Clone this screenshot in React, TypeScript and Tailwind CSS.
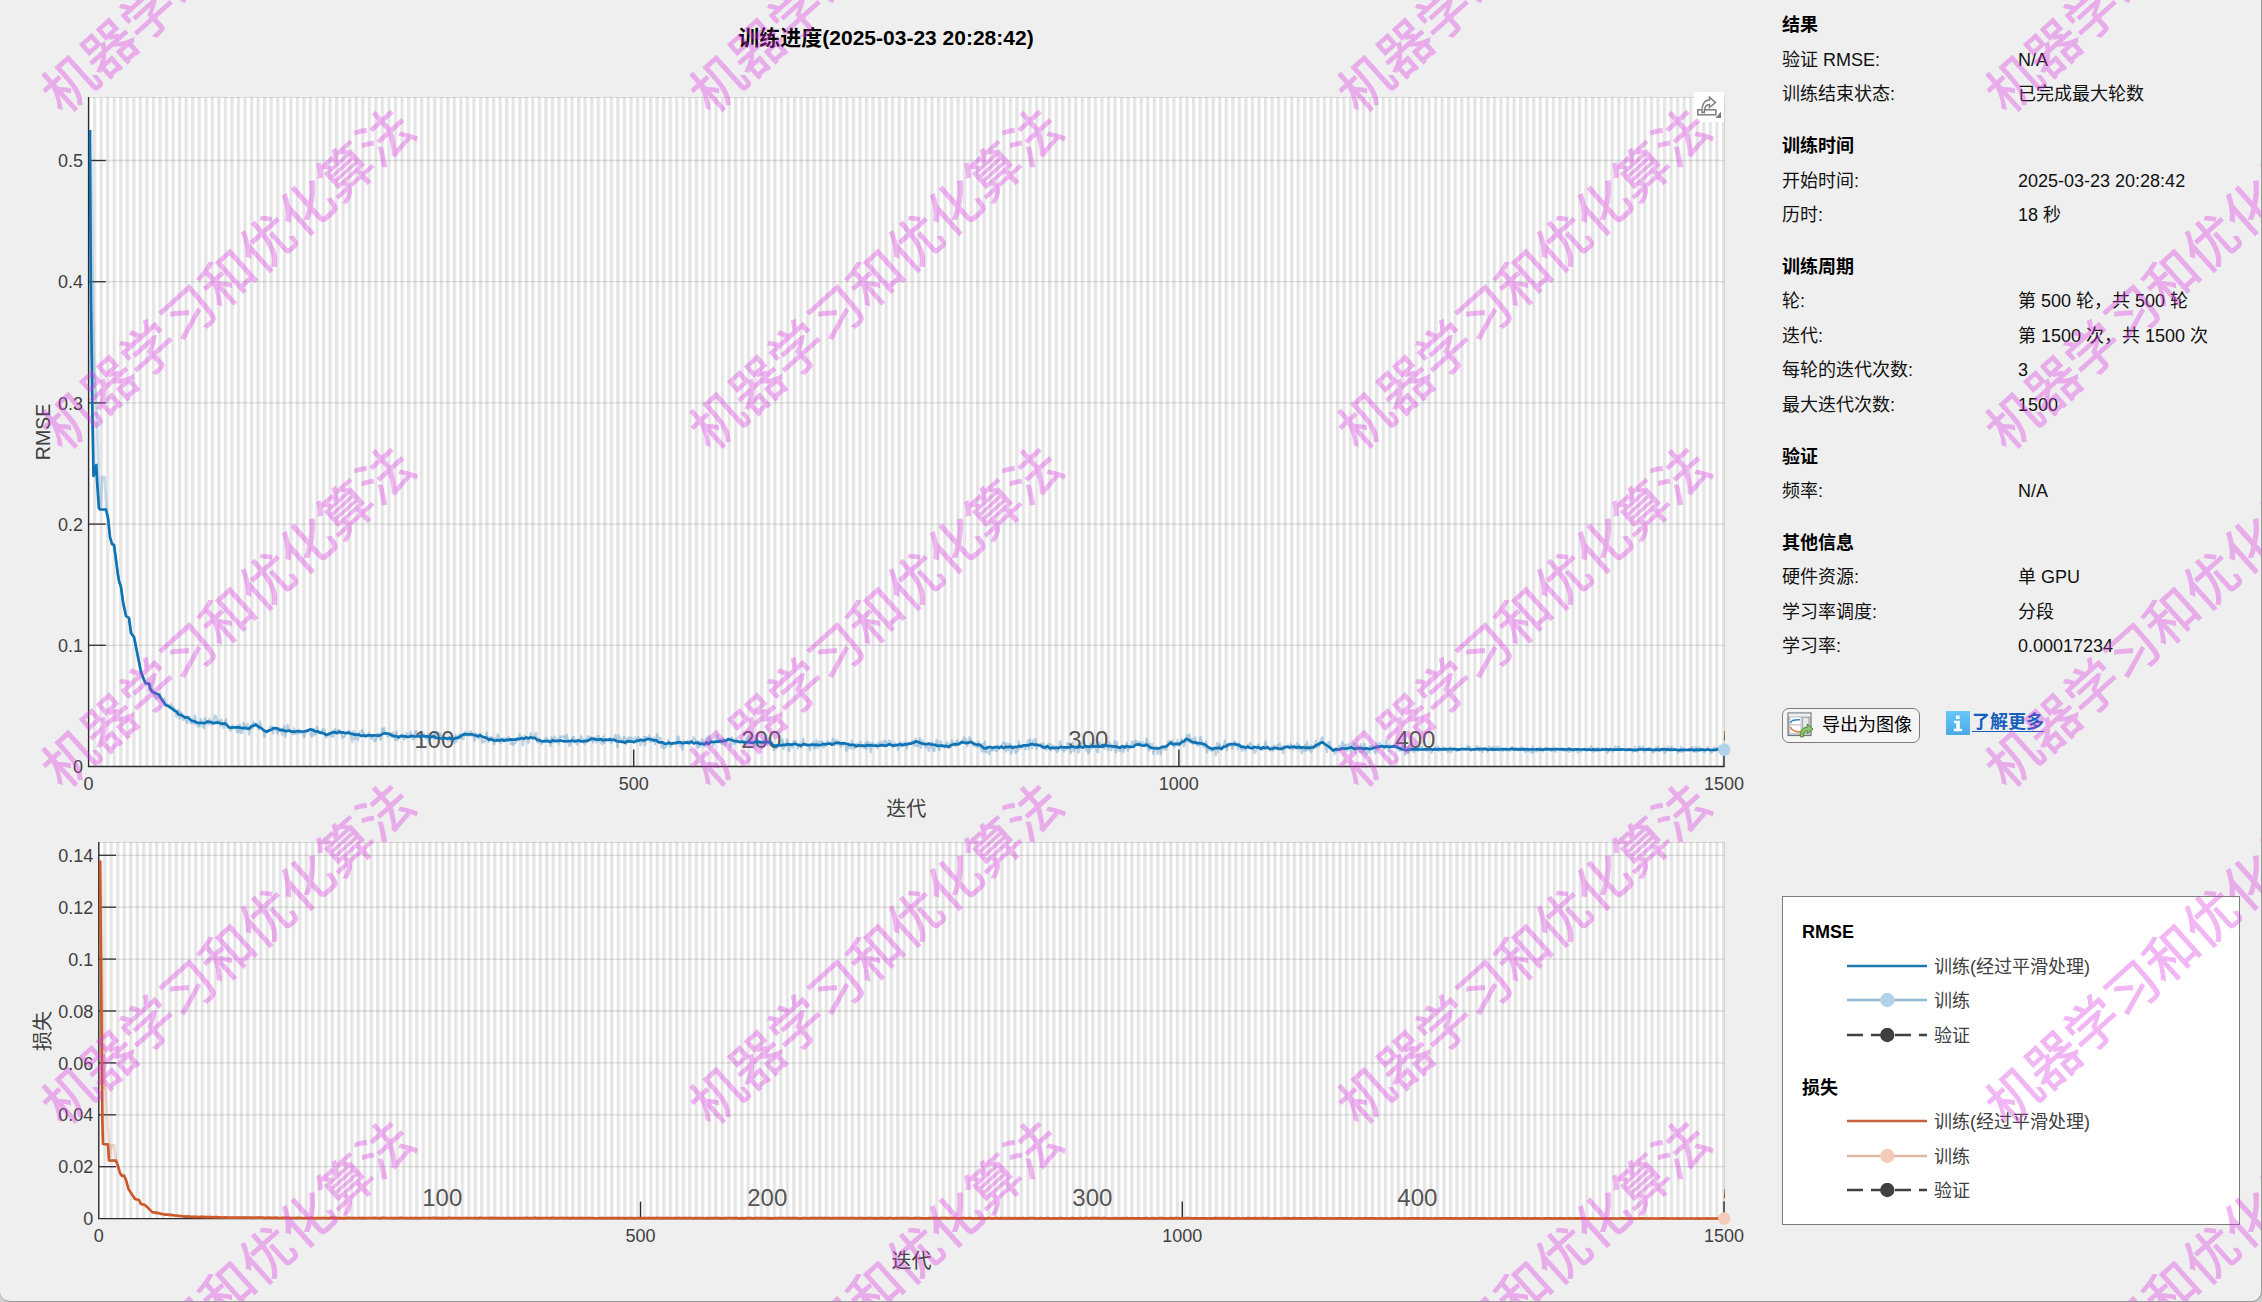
import clsx from "clsx";
import React from "react";

type Point = [number, number];

type PlotProps = {
  id: string;
  top: number;
  height: number;
  left: number;
  plotTop: number;
  bottom: number;
  yTicks: { label: string; y: number }[];
  yLabel: string;
  yLabelY: number;
  yLabelSize: number;
  smooth: Point[];
  raw: Point[];
  color: string;
  rawColor: string;
  markerColor: string;
  smoothNoise: number;
  rawNoise: number;
};

const RIGHT = 1724;
const FONT = '"Liberation Sans", "Noto Sans CJK SC", sans-serif';

const rmseCurve: Point[] = [
  [89.8, 130], [91, 300], [92.5, 420], [93.5, 476], [96.3, 465], [97, 480],
  [98.9, 508], [100, 509.5], [106, 509.5], [108, 518], [110, 537], [112, 544],
  [114, 545], [116, 560], [118, 575], [119, 581], [121, 587], [123, 602],
  [126, 616], [129, 618], [131, 633], [134, 637], [137, 652], [141, 672],
  [144, 680], [145.5, 683], [149, 684], [150, 689], [154, 693], [159, 695],
  [163, 701], [166, 705], [172, 709], [180, 715], [185, 717], [197, 722],
  [203, 723], [208, 722], [220, 723], [225, 724], [231, 728], [237, 727],
  [249, 729], [255, 724], [261, 729], [267, 732], [272, 729], [280, 729],
  [285, 731], [300, 731.7], [313, 730], [327, 734.3], [340, 731.7],
  [353, 734.3], [374, 736], [387, 733.3], [396, 736.7], [416, 736],
  [434, 737], [454, 739.3], [465, 734.3], [479, 735.7], [492, 740.3],
  [514, 739.3], [532, 737.7], [543, 741.7], [559, 741], [586, 741],
  [595, 738.3], [604, 740.3], [612, 739.7], [626, 742], [650, 739.3],
  [664, 743.3], [693, 742.3], [702, 744], [726, 740], [751, 742.3],
  [769, 741.7], [775, 745.7], [791, 744.3], [818, 745], [840, 743.3],
  [854, 745.7], [903, 745], [916, 742.3], [947, 746.7], [961, 742.7],
  [974, 742.7], [985, 747.7], [1000, 747], [1013, 747.3], [1022, 745.7],
  [1038, 744.3], [1043, 747], [1053, 747.7], [1067, 747], [1100, 747],
  [1103, 745.3], [1117, 747], [1132, 747], [1137, 744.3], [1147, 745],
  [1152, 748.3], [1160, 748.7], [1171, 743.3], [1177, 745], [1187, 739],
  [1192, 742.3], [1202, 743.3], [1212, 749], [1222, 748.3], [1233, 743.3],
  [1245, 747.7], [1283, 748.3], [1287, 747], [1313, 747.7], [1322, 742.3],
  [1333, 750], [1350, 747.7], [1372, 749], [1378, 746], [1393, 746],
  [1403, 749.3], [1500, 749.3], [1724, 749.8],
];

const rmseRaw: Point[] = [
  [91, 130], [93, 300], [94.5, 380], [96.5, 400], [98, 450], [99, 500],
  [101, 508], [102, 477], [104.5, 477], [106.5, 510],
];

const lossCurve: Point[] = [
  [100, 860.5], [101, 960], [101.8, 1060], [102.3, 1118], [103, 1144],
  [108, 1144.3], [109, 1160.5], [116, 1160.7], [118, 1166], [120, 1173],
  [122, 1176], [124, 1175.5], [126, 1180], [128.5, 1189], [133, 1196],
  [135, 1199], [139, 1200], [141, 1204], [145, 1205], [152, 1212],
  [165, 1214.5], [185, 1216.5], [230, 1217.6], [300, 1218], [1724, 1218.5],
];

const lossRaw: Point[] = [
  [101, 861], [103, 1050], [104.5, 1088], [106, 1090], [108, 1130],
  [110, 1158], [111.3, 1145], [114, 1145], [116, 1160],
];

const sections = [
  {
    title: "结果",
    rows: [
      ["验证 RMSE:", "N/A"],
      ["训练结束状态:", "已完成最大轮数"],
    ],
  },
  {
    title: "训练时间",
    rows: [
      ["开始时间:", "2025-03-23 20:28:42"],
      ["历时:", "18 秒"],
    ],
  },
  {
    title: "训练周期",
    rows: [
      ["轮:", "第 500 轮，共 500 轮"],
      ["迭代:", "第 1500 次，共 1500 次"],
      ["每轮的迭代次数:", "3"],
      ["最大迭代次数:", "1500"],
    ],
  },
  {
    title: "验证",
    rows: [["频率:", "N/A"]],
  },
  {
    title: "其他信息",
    rows: [
      ["硬件资源:", "单 GPU"],
      ["学习率调度:", "分段"],
      ["学习率:", "0.00017234"],
    ],
  },
];

function toPath(points: Point[]) {
  return points
    .map(([x, y], i) => `${i ? "L" : "M"}${x.toFixed(1)} ${y.toFixed(1)}`)
    .join("");
}

// Samples a curve every iteration or so and adds a repeatable jitter
function jitter(points: Point[], step: number, amount: number, seed: number) {
  let s = seed;
  const rand = () => {
    s = (s * 16807) % 2147483647;
    return s / 2147483647 - 0.5;
  };
  const out: Point[] = points.filter(([x]) => x < 150);
  let k = 0;
  for (let x = 150; x <= RIGHT; x += step) {
    while (k < points.length - 2 && points[k + 1][0] < x) k++;
    const [x0, y0] = points[k];
    const [x1, y1] = points[k + 1];
    const y = y0 + ((y1 - y0) * (x - x0)) / (x1 - x0);
    const scale = x > 1410 ? 0.5 : 1;
    out.push([x, y + (rand() + rand()) * amount * scale]);
  }
  return out;
}

function Plot(props: PlotProps) {
  const { id, top, height, left, plotTop, bottom, color } = props;
  const unit = (RIGHT - left) / 1500;
  const mid = (left + RIGHT) / 2;

  return (
    <svg
      className="block shrink-0"
      width={1762}
      height={height}
      viewBox={`0 ${top} 1762 ${height}`}
      fontFamily={FONT}
    >
      <defs>
        <pattern
          id={`${id}-epochs`}
          x={left + unit * 4}
          y={0}
          width={unit * 6}
          height={10}
          patternUnits="userSpaceOnUse"
        >
          <rect width={unit * 3} height={10} fill="#e5e5e5" />
        </pattern>
        <clipPath id={`${id}-clip`}>
          <rect x={left} y={plotTop} width={RIGHT - left + 1} height={bottom - plotTop + 3} />
        </clipPath>
      </defs>

      <rect x={left} y={plotTop} width={RIGHT - left} height={bottom - plotTop} fill="#fff" />
      <rect
        x={left + unit * 4}
        y={plotTop}
        width={RIGHT - left - unit * 4}
        height={bottom - plotTop}
        fill={`url(#${id}-epochs)`}
      />
      <path
        d={`M${left} ${plotTop + 0.5}H${RIGHT + 0.5}V${bottom}`}
        fill="none"
        stroke="#262626"
        strokeOpacity={0.14}
      />
      {props.yTicks.map(({ y, label }) => (
        <g key={label}>
          {label !== "0" && (
            <>
              <path d={`M${left} ${y}H${RIGHT}`} stroke="#262626" strokeOpacity={0.14} strokeWidth={1.3} />
              <path d={`M${left} ${y}h17.2`} stroke="#303030" strokeWidth={1.3} />
            </>
          )}
          <text x={left - 5.5} y={y + 6.6} textAnchor="end" fontSize={18} fill="#404040">
            {label}
          </text>
        </g>
      ))}

      <path d={`M${left} ${plotTop}V${bottom}H${RIGHT + 0.5}`} fill="none" stroke="#2b2b2b" strokeWidth={1.4} />
      {[0, 500, 1000, 1500].map((n) => (
        <g key={n}>
          {n > 0 && (
            <path d={`M${left + unit * n} ${bottom}v-17`} stroke="#2b2b2b" strokeWidth={1.4} />
          )}
          <text x={left + unit * n} y={bottom + 23.4} textAnchor="middle" fontSize={18} fill="#404040">
            {n}
          </text>
        </g>
      ))}

      <g clipPath={`url(#${id}-clip)`}>
        {[100, 200, 300, 400, 500].map((n) => (
          <text
            key={n}
            x={left + unit * (n * 3 + 17)}
            y={id === "rmse" ? 747.5 : 1206}
            textAnchor="middle"
            fontSize={24}
            fill="#555"
          >
            {n}
          </text>
        ))}
        <path
          d={toPath(jitter(props.smooth, 1.1, props.rawNoise, 77))}
          fill="none"
          stroke={props.rawColor}
          strokeOpacity={0.3}
          strokeWidth={2.2}
          strokeLinejoin="round"
        />
        <path d={toPath(props.raw)} fill="none" stroke={props.rawColor} strokeOpacity={0.25} strokeWidth={2.6} />
        <path
          d={toPath(jitter(props.smooth, 2.2, props.smoothNoise, 1234))}
          fill="none"
          stroke={color}
          strokeWidth={2.7}
          strokeLinejoin="round"
        />
      </g>
      <circle
        cx={RIGHT + 0.3}
        cy={props.smooth[props.smooth.length - 1][1]}
        r={6.3}
        fill={props.markerColor}
      />

      <text x={mid} y={bottom + 49} textAnchor="middle" fontSize={20} fill="#404040">
        迭代
      </text>
      <text
        transform={`translate(50 ${props.yLabelY}) rotate(-90)`}
        textAnchor="middle"
        fontSize={props.yLabelSize}
        fill="#404040"
      >
        {props.yLabel}
      </text>
    </svg>
  );
}

function ShareIcon() {
  return (
    <svg width="30" height="30" viewBox="0 0 30 30" className="block">
      <rect x="3.8" y="17.8" width="18" height="5" fill="#fff" stroke="#7d7d7d" strokeWidth="1.5" />
      <path
        d="M8 20.5C7.5 13 10 8.3 15.5 8V5.2L21.5 10.5L15.5 15.5V12.5C11.5 12.5 10.3 15 10.3 20.5Z"
        fill="#fff"
        stroke="#7d7d7d"
        strokeWidth="1.5"
      />
      <path d="M21.5 26H27V19.5Z" fill="#7d7d7d" />
    </svg>
  );
}

function ExportIcon() {
  return (
    <svg width="27" height="26" viewBox="0 0 27 26" className="block shrink-0">
      <rect x="1" y="1" width="23" height="22.5" fill="#c9ccd1" stroke="#777" strokeWidth="1.2" />
      <rect x="1.6" y="1.6" width="21.8" height="2.6" fill="#eceff3" />
      <rect x="3.5" y="5.5" width="10" height="6.5" fill="#fff" />
      <rect x="3.5" y="13.5" width="10" height="7.5" fill="#fff" />
      <rect x="15.8" y="5.5" width="6" height="15" fill="#e6e8ec" stroke="#999" strokeWidth=".7" />
      <path d="M3.5 11C5 7.5 7 7.8 13 7.8" fill="none" stroke="#2f86c7" strokeWidth="1.5" />
      <path d="M3.5 15C5 19 8 20 13.5 20" fill="none" stroke="#e07a3c" strokeWidth="1.5" />
      <path
        d="M13.3 24.8C12.8 18.5 15.5 15.4 20.2 15.3V12L26 17L20.2 21.6V18.8C17.5 18.8 16.5 20.5 16.6 24.8Z"
        fill="#8cc26a"
        stroke="#4a8a33"
        strokeWidth="1"
      />
    </svg>
  );
}

function LegendLine({ color, label, marker, dashed }: {
  color: string;
  label: string;
  marker?: string;
  dashed?: boolean;
}) {
  return (
    <div className="flex h-[34.5px] items-center pl-[45px] text-[#404040]">
      <svg width="80" height="16" className="mr-[7px] block shrink-0">
        <path
          d="M0 7H80"
          stroke={color}
          strokeWidth="2.4"
          strokeDasharray={dashed ? "16 8" : undefined}
        />
        {marker && <circle cx="40.3" cy="7" r="7.2" fill={marker} />}
      </svg>
      <span className="whitespace-nowrap">{label}</span>
    </div>
  );
}

function Legend() {
  return (
    <div className="mt-[153px] h-[329px] w-[458px] border border-[#7d7d7d] bg-white pt-[18.5px] pl-[19px]">
      <h3 className="flex h-[34.5px] items-center font-bold">RMSE</h3>
      <LegendLine color="#1f77b4" label="训练(经过平滑处理)" />
      <LegendLine color="#95b9d2" marker="#b1d3e9" label="训练" />
      <LegendLine color="#404040" marker="#404040" label="验证" dashed />
      <h3 className="mt-[17.5px] flex h-[34.5px] items-center font-bold">损失</h3>
      <LegendLine color="#c4623a" label="训练(经过平滑处理)" />
      <LegendLine color="#e0b6a4" marker="#f4cbba" label="训练" />
      <LegendLine color="#404040" marker="#404040" label="验证" dashed />
    </div>
  );
}

function Sidebar() {
  return (
    <aside className="flex w-[480px] flex-col pt-[8px] pl-[20px] text-[18px] leading-none text-black">
      {sections.map((section, i) => (
        <section key={section.title} className={clsx(i > 0 && "mt-[17.3px]")}>
          <h2 className="flex h-[34.5px] items-center font-bold">{section.title}</h2>
          <dl className="text-[#111]">
            {section.rows.map(([label, value]) => (
              <div key={label} className="flex h-[34.5px] items-center">
                <dt className="w-[236px]">{label}</dt>
                <dd className="whitespace-nowrap">{value}</dd>
              </div>
            ))}
          </dl>
        </section>
      ))}
      <div className="mt-[44px] flex h-[35px] items-start">
        <button className="flex h-[35px] w-[138px] items-center rounded-[7px] border border-[#7d7d7d] bg-[#f5f5f5] pl-[4px]">
          <ExportIcon />
          <span className="ml-[8px] whitespace-nowrap">导出为图像</span>
        </button>
        <a href="#" className="mt-[3px] ml-[26px] flex items-center text-[#1560bd]">
          <svg width="24" height="24" className="block">
            <defs>
              <linearGradient id="info" x1="0" y1="0" x2="0" y2="1">
                <stop offset="0" stopColor="#68c8fb" />
                <stop offset="1" stopColor="#49a9e3" />
              </linearGradient>
            </defs>
            <rect width="24" height="24" fill="url(#info)" />
            <path d="M10 4.5h3.6v3.4H10zM8 9.8h5.8v8h2.3v2.5H7.8v-2.5h2.5v-5.5H8z" fill="#fff" />
          </svg>
          <span className="ml-[2px] border-b-[1.5px] border-[#1560bd] font-bold whitespace-nowrap">
            了解更多
          </span>
        </a>
      </div>
      <Legend />
    </aside>
  );
}

function Watermark() {
  return (
    <div className="pointer-events-none absolute inset-0 overflow-hidden">
      {[84.5, 421.8, 759.2, 1096.5, 1433.8].map((y) =>
        [70, 718, 1366, 2014].map((x) => (
          <span
            key={`${x}-${y}`}
            className="absolute origin-[26.5px_26.5px] rotate-[-42deg] text-[53.1px] leading-[53px] whitespace-nowrap text-[#da33e0] opacity-35 [-webkit-text-stroke:1px_#da33e0]"
            style={{ left: x - 26.5, top: y - 26.5 }}
          >
            机器学习和优化算法
          </span>
        ))
      )}
    </div>
  );
}

function App() {
  return (
    <div className="h-[1302px] w-[2262px] overflow-hidden bg-[#cfcfcf] font-['Liberation_Sans','Noto_Sans_CJK_SC',sans-serif]">
      <div className="relative flex h-[1302px] w-[2262px] overflow-hidden rounded-b-[10px] border-r border-b border-[#999] bg-[#efefef]">
        <main className="relative flex w-[1762px] flex-col">
          <h1 className="flex h-[72px] w-[1772px] items-center justify-center pt-[2px] text-[21px] leading-none font-bold text-black">
            训练进度(2025-03-23 20:28:42)
          </h1>
          <Plot
            id="rmse"
            top={72}
            height={758}
            left={88.6}
            plotTop={97}
            bottom={766.5}
            yTicks={["0", "0.1", "0.2", "0.3", "0.4", "0.5"].map((label, i) => ({
              label,
              y: 766.5 - i * 121.2,
            }))}
            yLabel="RMSE"
            yLabelY={432}
            yLabelSize={19.5}
            smooth={rmseCurve}
            raw={rmseRaw}
            color="#0f72b5"
            rawColor="#1f77b4"
            markerColor="#b0d2ea"
            smoothNoise={1.2}
            rawNoise={7.5}
          />
          <Plot
            id="loss"
            top={830}
            height={471}
            left={98.8}
            plotTop={842}
            bottom={1218.6}
            yTicks={["0", "0.02", "0.04", "0.06", "0.08", "0.1", "0.12", "0.14"].map((label, i) => ({
              label,
              y: 1218.6 - i * 51.9,
            }))}
            yLabel="损失"
            yLabelY={1031}
            yLabelSize={20}
            smooth={lossCurve}
            raw={lossRaw}
            color="#ce5a2b"
            rawColor="#c4623a"
            markerColor="#f4cbba"
            smoothNoise={0.2}
            rawNoise={0.6}
          />
          <button className="absolute top-[92px] left-[1694px] bg-white">
            <ShareIcon />
          </button>
        </main>
        <Sidebar />
        <Watermark />
      </div>
    </div>
  );
}

export default App;
